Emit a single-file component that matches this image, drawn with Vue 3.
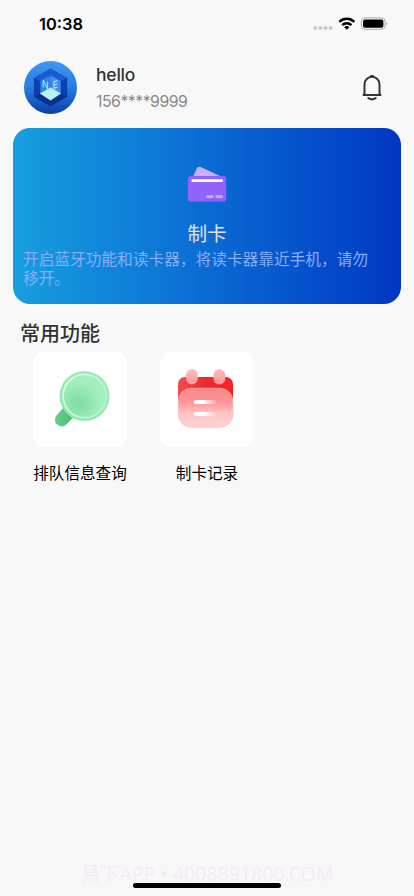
<script setup>
const user = { name: 'hello', phone: '156****9999' }
const features = [
  { icon: 'search', label: '排队信息查询' },
  { icon: 'record', label: '制卡记录' },
]
</script>

<template>
  <div class="screen">
    <header class="status">
      <span class="time">10:38</span>
      <svg class="indicators" width="76" height="20" viewBox="0 0 76 20">
        <g fill="#c8c8c8">
          <rect x="1.4" y="12.2" width="3.6" height="3.6" rx="1" />
          <rect x="6.6" y="12.2" width="3.6" height="3.6" rx="1" />
          <rect x="11.7" y="12.2" width="3.6" height="3.6" rx="1" />
          <rect x="16.7" y="12.2" width="3.6" height="3.6" rx="1" />
        </g>
        <g fill="none" stroke="#000" stroke-width="2.4">
          <path d="M27.3 7.9a10.6 10.6 0 0 1 15 0" />
          <path d="M30.2 11.1a6.6 6.6 0 0 1 9.2 0" />
        </g>
        <path d="M32.2 13.2a3.8 3.8 0 0 1 5.2 0L34.8 15.8z" fill="#000" />
        <rect x="49.4" y="3.9" width="23.6" height="11.4" rx="3.4" fill="none" stroke="#aaa" stroke-width="1" />
        <rect x="51" y="5.4" width="20.4" height="8.4" rx="2" fill="#000" />
        <path d="M74.2 7.6q1.5 2 0 4.1z" fill="#999" />
      </svg>
    </header>

    <section class="profile">
      <svg class="avatar" width="53" height="53" viewBox="0 0 52 52">
        <defs>
          <linearGradient id="avatarFill" x1="0" y1="0" x2="0" y2="1">
            <stop offset="0" stop-color="#3d97f3" />
            <stop offset=".5" stop-color="#287ce0" />
            <stop offset="1" stop-color="#0b3ea8" />
          </linearGradient>
        </defs>
        <circle cx="26" cy="26" r="26" fill="url(#avatarFill)" />
        <path d="M26 7.5 42.3 16.8V35L26 44.3 9.7 35V16.8z" fill="#0c3fae" />
        <path d="M26 7.5 42.3 16.8 36 20 26 14 16 20 9.7 16.8z" fill="#1c5ad4" />
        <path d="M9.7 35 16 31.8 26 38.5 36 31.8 42.3 35 26 44.3z" fill="#09328f" />
        <path d="M26 14 16 19.7V32l10-5.5z" fill="#2f83e6" />
        <path d="M26 14 36 19.7V32l-10-5.5z" fill="#3c91ee" />
        <path d="M26 26 36.4 32 26 38.7 15.6 32z" fill="#b9f2f3" />
        <text class="mark" transform="matrix(.85 .32 0 1 17.7 25.4)">N</text>
        <text class="mark" transform="matrix(.85 -.32 0 1 28.3 27.6)">E</text>
      </svg>
      <div class="identity">
        <div class="name">{{ user.name }}</div>
        <div class="phone">{{ user.phone }}</div>
      </div>
      <svg class="bell" width="22" height="28" viewBox="0 0 22 28" fill="none" stroke="#363636" stroke-linecap="round" stroke-linejoin="round">
        <path d="M3.5 20.2V11.4a7.5 7.6 0 0 1 15 0v8.8l1 1.9h-17z" stroke-width="2" />
        <path d="M10 3.1h2" stroke-width="2.2" />
        <path d="M7.4 25.2q3.6 2.4 7.2 0" stroke-width="2.1" />
      </svg>
    </section>

    <section class="banner">
      <svg class="cards" width="40" height="38" viewBox="0 0 40 38">
        <path d="M5.6 13 9.6 3.7Q10.8 1 13.6 2.1L34 11.5V14H5.6z" fill="#c8b0ff" />
        <rect x=".8" y="11" width="38.4" height="25.6" rx="3.4" fill="#9163fb" />
        <rect x="4.4" y="14.3" width="31.4" height="2.8" rx="1" fill="#fff" />
        <rect x="19.2" y="30.2" width="7.4" height="2.8" rx="1.2" fill="#c8b0ff" />
        <rect x="28.4" y="30.2" width="7.4" height="2.8" rx="1.2" fill="#c8b0ff" />
      </svg>
      <h1 class="banner-title">制卡</h1>
      <p class="banner-text">开启蓝牙功能和读卡器，将读卡器靠近手机，请勿移开。</p>
    </section>

    <h2 class="heading">常用功能</h2>
    <section class="features">
      <div v-for="item in features" :key="item.icon" class="feature">
        <div class="tile">
          <svg v-if="item.icon === 'search'" width="94" height="95" viewBox="0 0 94 95">
            <defs>
              <linearGradient id="handle" gradientUnits="userSpaceOnUse" x1="24" y1="63" x2="42" y2="64">
                <stop offset="0" stop-color="#62d08c" />
                <stop offset="1" stop-color="#45b970" />
              </linearGradient>
              <radialGradient id="lens" cx=".36" cy=".67" r=".5">
                <stop offset="0" stop-color="#7bdd9d" />
                <stop offset="1" stop-color="#a4edbd" />
              </radialGradient>
              <linearGradient id="ring" x1="0" y1=".2" x2="1" y2=".7">
                <stop offset="0" stop-color="#e0fbe8" />
                <stop offset=".5" stop-color="#c6f6d5" />
                <stop offset="1" stop-color="#b6f3c9" />
              </linearGradient>
              <linearGradient id="rim" x1="0" y1="1" x2="1" y2="0">
                <stop offset="0" stop-color="#8be6aa" />
                <stop offset="1" stop-color="#a1edba" />
              </linearGradient>
            </defs>
            <path d="M28.7 67.6 38 57.5" stroke="url(#handle)" stroke-width="13.6" stroke-linecap="round" />
            <circle cx="51.6" cy="44" r="25" fill="url(#rim)" />
            <circle cx="51.6" cy="44" r="21.6" fill="url(#lens)" stroke="url(#ring)" stroke-width="1.8" />
          </svg>
          <svg v-else width="94" height="95" viewBox="0 0 94 95">
            <defs>
              <linearGradient id="cover" x1="0" y1="0" x2="1" y2="0">
                <stop offset="0" stop-color="#f64a50" />
                <stop offset=".5" stop-color="#ee292e" />
                <stop offset="1" stop-color="#fb2024" />
              </linearGradient>
              <linearGradient id="sheet" x1="0" y1="0" x2="0" y2="1">
                <stop offset="0" stop-color="#fb888a" />
                <stop offset=".35" stop-color="#fd9496" />
                <stop offset=".65" stop-color="#ffc5c5" />
                <stop offset="1" stop-color="#ffd2d2" />
              </linearGradient>
              <linearGradient id="pin" x1="0" y1="0" x2="0" y2="1">
                <stop offset="0" stop-color="#ffc0c0" />
                <stop offset="1" stop-color="#fb9698" />
              </linearGradient>
              <linearGradient id="line" x1="0" y1="0" x2="1" y2="0">
                <stop offset="0" stop-color="#fff" />
                <stop offset=".4" stop-color="#fff" />
                <stop offset="1" stop-color="#fff" stop-opacity="0" />
              </linearGradient>
            </defs>
            <path d="M18 32a7 7 0 0 1 7-7H66a7 7 0 0 1 7 7v17H18z" fill="url(#cover)" />
            <rect x="18.3" y="36.2" width="54.6" height="39" rx="13" fill="url(#sheet)" stroke="#ffb4b4" stroke-width=".7" />
            <rect x="26" y="17" width="11.8" height="15.6" rx="5.9" fill="url(#pin)" />
            <rect x="53.5" y="17" width="11.8" height="15.6" rx="5.9" fill="url(#pin)" />
            <rect x="33.7" y="48" width="24" height="4" rx="2" fill="url(#line)" />
            <rect x="33.7" y="60" width="24" height="4" rx="2" fill="url(#line)" />
          </svg>
        </div>
        <span class="label">{{ item.label }}</span>
      </div>
    </section>

    <footer class="footer">
      <span class="watermark">易下APP • 4008891800.COM</span>
      <span class="home-bar"></span>
    </footer>
  </div>
</template>

<style>
body {
  margin: 0;
  background: #f8f8f8;
}
</style>

<style scoped>
.screen {
  box-sizing: border-box;
  display: flex;
  flex-direction: column;
  width: 414px;
  height: 896px;
  overflow: hidden;
  background: #f8f8f8;
  color: #333;
  font-family: Inter, "Noto Sans CJK SC", sans-serif;
}
.status {
  display: flex;
  justify-content: space-between;
  align-items: center;
  height: 48px;
  padding: 0 26px 0 39px;
}
.time {
  font-size: 16.4px;
  font-weight: 600;
  color: #000;
}
.profile {
  display: flex;
  align-items: center;
  height: 80px;
  padding: 0 31px 0 24px;
}
.avatar {
  flex: none;
  margin-top: -1px;
}
.mark {
  font-size: 10px;
  fill: #c9f0ff;
}
.identity {
  flex: 1;
  margin-left: 19px;
}
.name {
  height: 26px;
  font-size: 17.5px;
  font-weight: 500;
  line-height: 25px;
  letter-spacing: -0.2px;
}
.phone {
  height: 26px;
  font-size: 15.8px;
  line-height: 27px;
  letter-spacing: -0.48px;
  color: #888;
}
.bell {
  flex: none;
  margin-top: -2px;
}
.banner {
  box-sizing: border-box;
  display: flex;
  flex-direction: column;
  align-items: center;
  width: 388px;
  height: 176px;
  margin-left: 13px;
  padding: 37px 10px 0;
  border-radius: 17px;
  background: linear-gradient(90deg, #169fdf, #0a6bd3 50%, #0037c3);
}
.banner-title {
  margin: 16px 0 0;
  font-size: 19.6px;
  font-weight: 400;
  line-height: 30px;
  color: #e2e2e2;
}
.banner-text {
  align-self: stretch;
  margin: 2px 0 0;
  padding-right: 20px;
  font-size: 15.7px;
  line-height: 18.5px;
  color: #86aefa;
}
.heading {
  margin: 15px 0 3px 20px;
  font-size: 20px;
  font-weight: 500;
  line-height: 30px;
}
.features {
  display: flex;
  gap: 33px;
  padding-left: 33px;
}
.feature {
  display: flex;
  flex-direction: column;
  align-items: center;
  width: 94px;
}
.tile {
  width: 94px;
  height: 95px;
  border-radius: 11px;
  background: #fff;
}
.tile svg {
  display: block;
}
.label {
  margin-top: 16px;
  font-size: 15.6px;
  line-height: 22px;
  white-space: nowrap;
  color: #000;
}
.footer {
  display: flex;
  flex-direction: column;
  align-items: center;
  margin-top: auto;
  padding-bottom: 8px;
}
.watermark {
  font-family: "Noto Sans", "Noto Sans CJK SC", sans-serif;
  font-size: 19.5px;
  line-height: 28px;
  white-space: nowrap;
  color: #fae8f9;
}
.home-bar {
  z-index: 1;
  width: 148px;
  height: 5px;
  margin-top: -5px;
  border-radius: 3px;
  background: #000;
}
</style>
